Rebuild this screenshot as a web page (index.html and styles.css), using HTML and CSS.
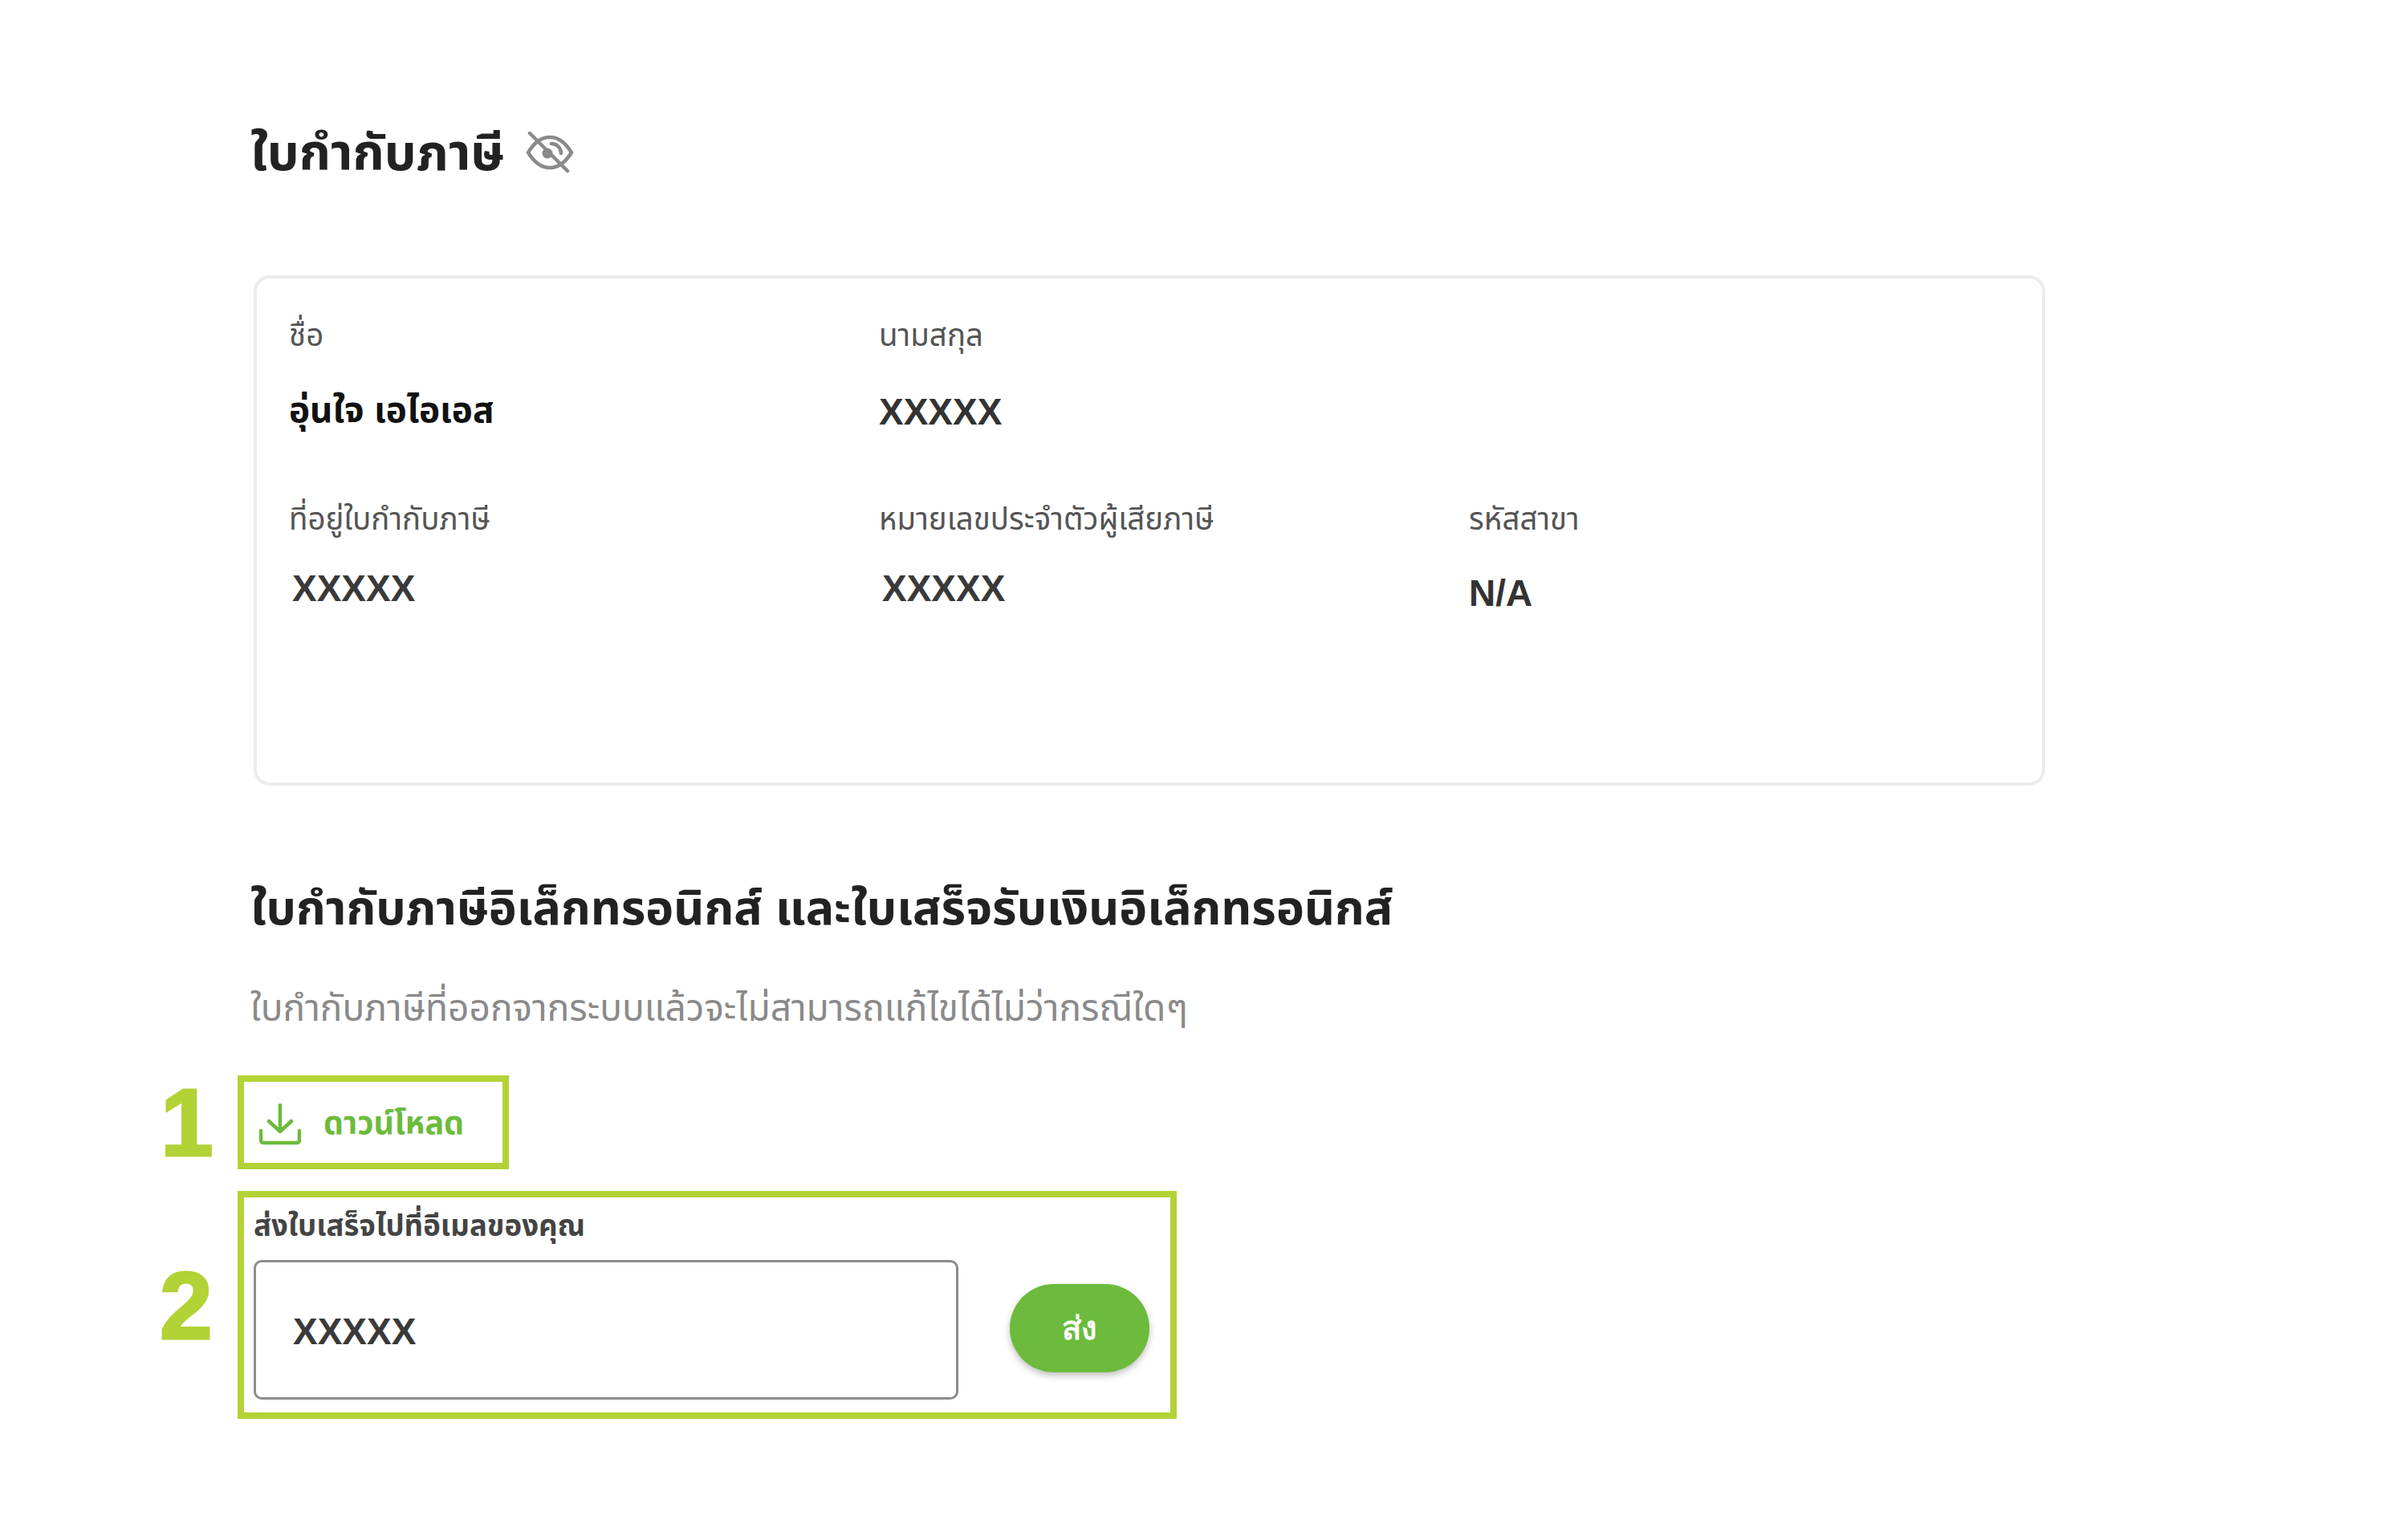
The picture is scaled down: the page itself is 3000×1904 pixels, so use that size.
FILE: index.html
```html
<!DOCTYPE html>
<html lang="th">
<head>
<meta charset="utf-8">
<title>ใบกำกับภาษี</title>
<link rel="stylesheet" href="styles.css">
</head>
<body>
<main class="page">
  <h1 class="title title-main">ใบกำกับภาษี
    <svg class="eye" viewBox="0 0 60 52" fill="none" stroke="#8a8a8a" stroke-width="4.5" stroke-linecap="round" stroke-linejoin="round">
      <path d="M3 26C11 13 20 7 30 7s19 6 27 19c-8 13-17 19-27 19S11 39 3 26Z"/>
      <path d="M32 15a12 12 0 0 1 12 12"/>
      <circle cx="27" cy="27" r="6.5" fill="#8a8a8a" stroke="none"/>
      <path d="M5 2l47 47"/>
    </svg>
  </h1>
  <section class="card">
    <div class="field f-top">
      <div class="label">ชื่อ</div>
      <div class="value name">อุ่นใจ เอไอเอส</div>
    </div>
    <div class="field f-top">
      <div class="label">นามสกุล</div>
      <div class="value dark">XXXXX</div>
    </div>
    <div class="field f-top"></div>
    <div class="field">
      <div class="label">ที่อยู่ใบกำกับภาษี</div>
      <div class="value shift">XXXXX</div>
    </div>
    <div class="field">
      <div class="label">หมายเลขประจำตัวผู้เสียภาษี</div>
      <div class="value shift">XXXXX</div>
    </div>
    <div class="field">
      <div class="label">รหัสสาขา</div>
      <div class="value na">N/A</div>
    </div>
  </section>
  <h2 class="title title-sub">ใบกำกับภาษีอิเล็กทรอนิกส์ และใบเสร็จรับเงินอิเล็กทรอนิกส์</h2>
  <p class="note">ใบกำกับภาษีที่ออกจากระบบแล้วจะไม่สามารถแก้ไขได้ไม่ว่ากรณีใดๆ</p>
  <div class="step step-1">
    <span class="num num-1">1</span>
    <a class="download">
      <svg class="dl-icon" viewBox="0 0 52 52" fill="none" stroke="#6cbb3c" stroke-width="4.5" stroke-linecap="round" stroke-linejoin="round">
        <path d="M26 2v32M12 22l14 13 14-13"/>
        <path d="M2 34v12a3 3 0 0 0 3 3h42a3 3 0 0 0 3-3V34"/>
      </svg>
      <span>ดาวน์โหลด</span>
    </a>
  </div>
  <div class="step step-2">
    <span class="num num-2">2</span>
    <div class="send">
      <div class="send-label">ส่งใบเสร็จไปที่อีเมลของคุณ</div>
      <div class="send-row">
        <div class="input">XXXXX</div>
        <button class="btn">ส่ง</button>
      </div>
    </div>
  </div>
</main>
</body>
</html>
```
FILE: styles.css
```css
* { box-sizing: border-box; }
html, body { margin: 0; background: #fff; }
body {
  width: 3000px;
  height: 1904px;
  overflow: hidden;
  font-family: "Liberation Sans", "Noto Sans", "Noto Sans Thai", sans-serif;
  color: #222;
}
.page { padding: 140px 0 0 312px; }
.title { margin: 0; color: #222; font-weight: 700; }
.title-main {
  font-size: 63px;
  line-height: 100px;
  display: flex;
  align-items: center;
  gap: 26px;
}
.eye { width: 60px; height: 52px; }
.card {
  width: 2232px;
  height: 636px;
  margin: 103px 0 0 4px;
  padding: 46px 0 0 40px;
  border: 4px solid #ececec;
  border-radius: 20px;
  display: grid;
  grid-template-columns: 735px 735px 1fr;
  grid-template-rows: 229px auto;
  align-content: start;
}
.label { font-size: 38.5px; line-height: 50px; color: #555; }
.value { font-weight: 700; font-size: 46px; line-height: 60px; color: #3a3a3a; margin-top: 40px; }
.value.name { color: #111; font-size: 44px; margin-top: 38px; }
.value.dark { color: #333; }
.value.shift { margin: 31px 0 0 4px; }
.value.na { color: #333; margin-top: 37px; }
.title-sub { font-size: 59px; line-height: 90px; margin-top: 108px; }
.note { margin: 44px 0 0; font-size: 46px; line-height: 70px; color: #8a8a8a; }
.step { position: relative; margin: 49px 0 0 -16px; }
.step-2 { margin-top: 27px; }
.num {
  position: absolute;
  font-weight: 700;
  color: #b2d235;
  font-size: 118px;
  line-height: 1;
  -webkit-text-stroke: 3px #b2d235;
}
.num-1 { left: -96px; top: 0; }
.num-2 { left: -97px; top: 84px; }
.download {
  width: 338px;
  height: 117px;
  border: 8px solid #b2d235;
  display: flex;
  align-items: center;
  gap: 28px;
  padding: 4px 0 0 19px;
  font-size: 39.5px;
  font-weight: 700;
  color: #6cbb3c;
}
.dl-icon { width: 52px; height: 52px; }
.send {
  width: 1170px;
  height: 284px;
  border: 8px solid #b2d235;
  padding: 11px 0 0 12px;
}
.send-label { font-size: 36.6px; line-height: 50px; font-weight: 700; color: #444; }
.send-row { display: flex; align-items: center; gap: 64px; margin-top: 17px; }
.input {
  width: 878px;
  height: 174px;
  border: 3px solid #8c8c8c;
  border-radius: 10px;
  padding: 56px 0 0 46px;
  font-weight: 700;
  font-size: 46px;
  line-height: 60px;
  color: #3a3a3a;
}
.btn {
  width: 174px;
  height: 110px;
  margin-bottom: 4px;
  border: 0;
  border-radius: 55px;
  background: #6cbb3c;
  color: #fff;
  font: 700 40px "Liberation Sans", "Noto Sans", sans-serif;
  box-shadow: 0 4px 8px rgba(0,0,0,.25);
}
```
